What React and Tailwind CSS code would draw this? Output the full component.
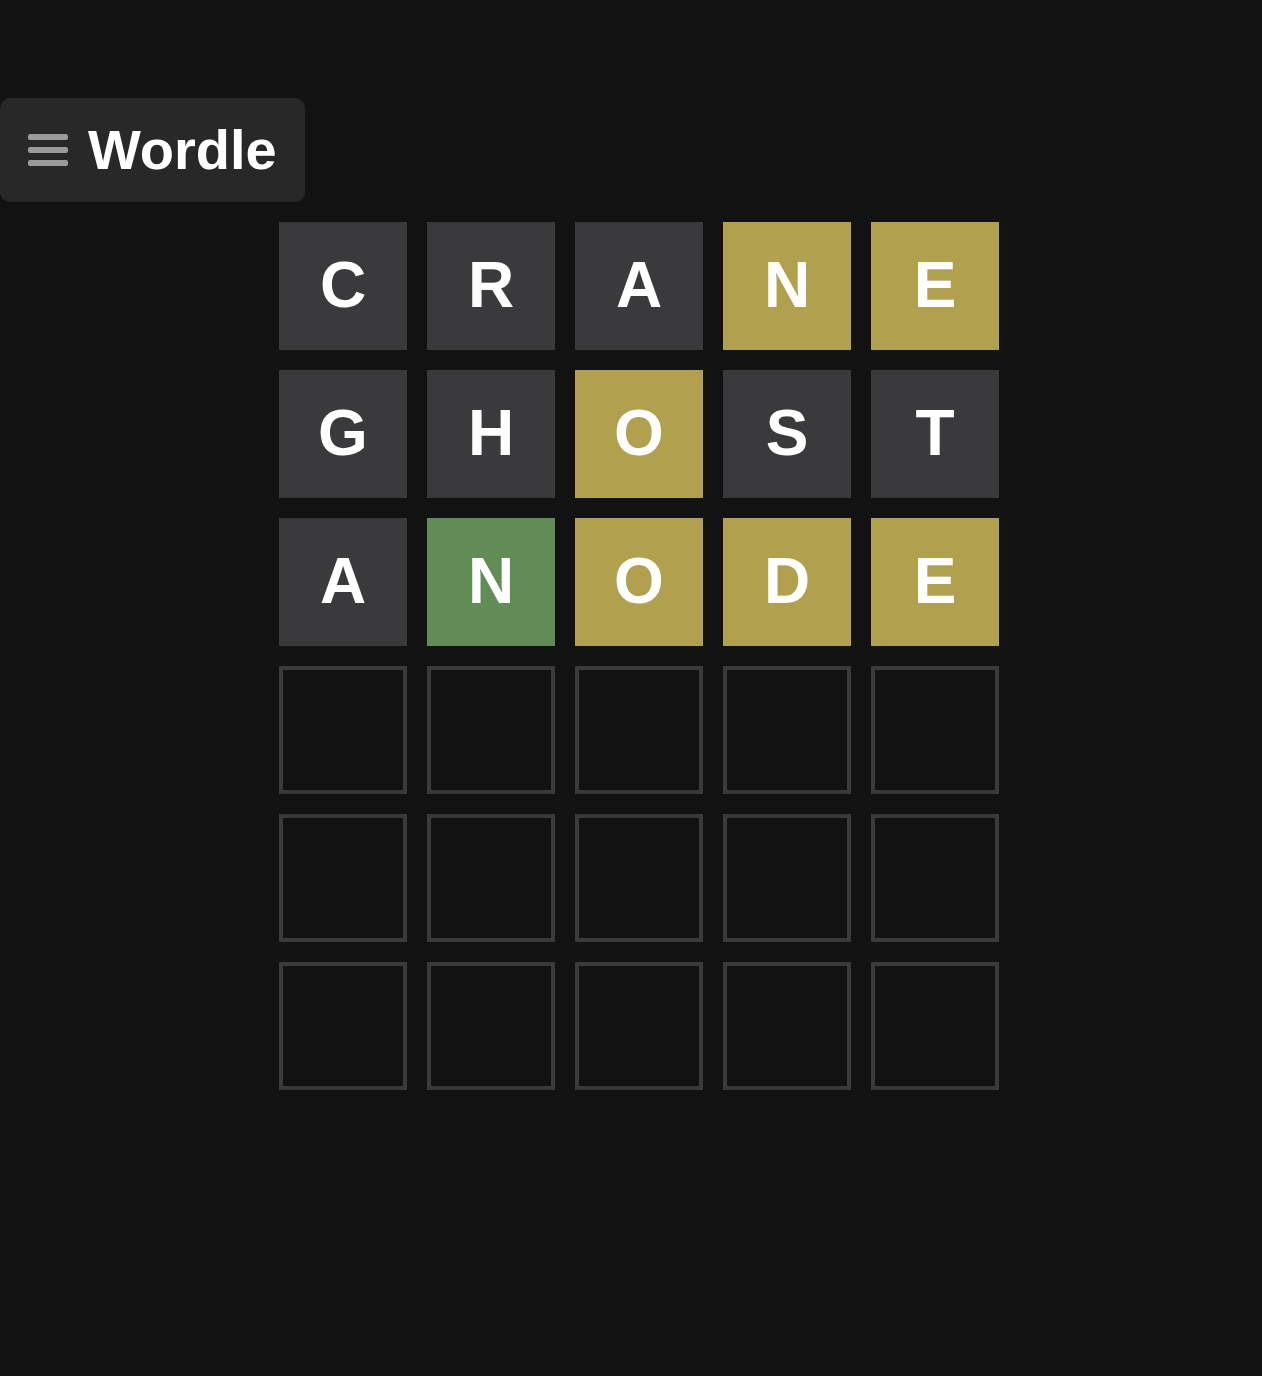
export default function App() {
  const rows = [
    [
      ['C', 'absent'],
      ['R', 'absent'],
      ['A', 'absent'],
      ['N', 'present'],
      ['E', 'present'],
    ],
    [
      ['G', 'absent'],
      ['H', 'absent'],
      ['O', 'present'],
      ['S', 'absent'],
      ['T', 'absent'],
    ],
    [
      ['A', 'absent'],
      ['N', 'correct'],
      ['O', 'present'],
      ['D', 'present'],
      ['E', 'present'],
    ],
    [null, null, null, null, null],
    [null, null, null, null, null],
    [null, null, null, null, null],
  ];

  const tileClass = {
    absent: 'bg-[#3a3a3c]',
    present: 'bg-[#b1a04d]',
    correct: 'bg-[#618c55]',
  };

  return (
    <div
      className="min-h-[1376px] bg-[#121212] pt-[98px]"
      style={{ fontFamily: '"Liberation Sans", Arial, sans-serif' }}
    >
      <div className="flex h-[104px] w-[305px] items-center gap-5 rounded-[10px] bg-[#282828] pl-7">
        <div className="flex w-10 flex-col gap-[7px]">
          <span className="h-[6px] rounded-[2px] bg-[#9b9b9b]" />
          <span className="h-[6px] rounded-[2px] bg-[#9b9b9b]" />
          <span className="h-[6px] rounded-[2px] bg-[#9b9b9b]" />
        </div>
        <h1 className="text-[56px] leading-none font-bold text-white">Wordle</h1>
      </div>

      <div className="mt-5 ml-[279px] flex flex-col gap-5">
        {rows.map((row, i) => (
          <div key={i} className="flex gap-5">
            {row.map((cell, j) =>
              cell ? (
                <div
                  key={j}
                  className={`flex h-32 w-32 items-center justify-center pb-[3px] text-[64px] leading-none font-bold text-white ${tileClass[cell[1]]}`}
                >
                  {cell[0]}
                </div>
              ) : (
                <div key={j} className="h-32 w-32 border-4 border-[#3a3a3c]" />
              )
            )}
          </div>
        ))}
      </div>
    </div>
  );
}
